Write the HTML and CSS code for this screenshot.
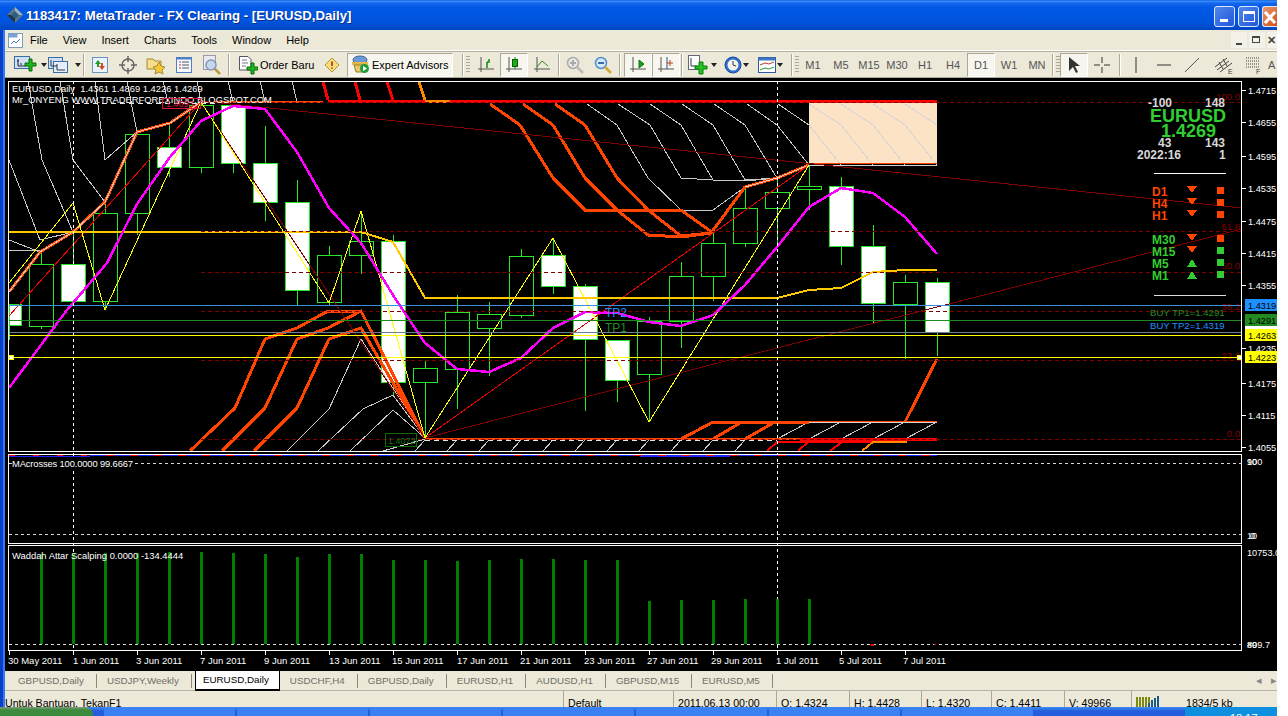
FILE: index.html
```html
<!DOCTYPE html>
<html lang="id">

<head>
    <meta charset="UTF-8">
    <meta name="viewport" content="width=device-width, initial-scale=1.0">
    <title>1183417: MetaTrader - FX Clearing - [EURUSD,Daily]</title>
    <link rel="stylesheet" href="styles.css">
</head>

<body>
    <div class="app">
        <!-- title bar -->
        <div class="titlebar">
            <svg class="title-icon" width="16" height="16" viewBox="0 0 16 16">
                <path d="M8 0 16 8 8 16 0 8Z" fill="#5a7488" />
                <path d="M8 0 16 8H8Z" fill="#9db4c4" />
                <path d="M0 8 8 16V8Z" fill="#1d3346" />
                <path d="M8 4 12 8 8 12 4 8Z" fill="#2c5f7e" />
            </svg>
            <span class="title-text">1183417: MetaTrader - FX Clearing - [EURUSD,Daily]</span>
            <div class="win-btns">
                <div class="win-btn"><span class="glyph-min"></span></div>
                <div class="win-btn"><span class="glyph-max"></span></div>
                <div class="win-btn win-close">
                    <svg width="16" height="21" viewBox="0 0 16 21"><path d="M2 5 12 16M12 5 2 16" stroke="#fff" stroke-width="3" /></svg>
                </div>
            </div>
        </div>

        <!-- menu -->
        <div class="menubar">
            <svg class="menu-icon" width="15" height="15" viewBox="0 0 15 15">
                <rect x="0.5" y="0.5" width="14" height="14" fill="#fff" stroke="#7f9db9" />
                <rect x="0.5" y="0.5" width="9" height="4" fill="#7aa2d8" />
                <path d="M3 11 6 8 8 10 12 6" fill="none" stroke="#4a7ab8" />
            </svg>
            <span class="menu-item">File</span>
            <span class="menu-item">View</span>
            <span class="menu-item">Insert</span>
            <span class="menu-item">Charts</span>
            <span class="menu-item">Tools</span>
            <span class="menu-item">Window</span>
            <span class="menu-item">Help</span>
            <div class="mdi-btns">
                <div class="mdi-btn"><span class="mdi-min"></span></div>
                <div class="mdi-btn"><span class="mdi-rest"></span></div>
                <div class="mdi-btn mdi-x">✕</div>
            </div>
        </div>

        <!-- toolbar -->
        <div class="toolbar">
            <div class="tb w34">
                <svg width="26" height="20" viewBox="0 0 26 20">
                    <rect x="0.5" y="1.5" width="15" height="12" fill="#cfe0f4" stroke="#3a6ea5" />
                    <path d="M4 4V11H12M3 6H5M6 9H8" fill="none" stroke="#223" />
                    <path d="M11 8H15V4H18V8H22V11H18V16H15V11H11Z" fill="#1fb51f" stroke="#0b6b0b" />
                </svg>
                <i class="caret"></i>
            </div>
            <div class="tb w34">
                <svg width="26" height="20" viewBox="0 0 26 20">
                    <rect x="0.5" y="2.5" width="14" height="11" fill="#cfe0f4" stroke="#3a6ea5" />
                    <rect x="5.5" y="6.5" width="14" height="11" fill="#e4eefa" stroke="#3a6ea5" />
                    <path d="M3 5V11H9M9 9V15H17" fill="none" stroke="#334" />
                </svg>
                <i class="caret"></i>
            </div>
            <div class="sep ml2 mr1"></div>
            <div class="tb">
                <svg width="16" height="18" viewBox="0 0 16 18">
                    <rect x="0.5" y="1.5" width="15" height="15" fill="#eaf2fb" stroke="#6b93c4" />
                    <path d="M6 4 9 8H7V11H5V8H3Z" fill="#1f9e1f" />
                    <path d="M10 14 7 10H9V7H11V10H13Z" fill="#d9451f" />
                </svg>
            </div>
            <div class="tb">
                <svg width="20" height="20" viewBox="0 0 20 20" fill="none" stroke="#666">
                    <circle cx="10" cy="10" r="6" stroke-width="1.5" />
                    <path d="M10 1V7M10 13V19M1 10H7M13 10H19" stroke-width="1.5" />
                </svg>
            </div>
            <div class="tb">
                <svg width="20" height="20" viewBox="0 0 20 20">
                    <path d="M1 4H7L9 6H15V14H1Z" fill="#f4dd8c" stroke="#a98a2c" />
                    <path d="M13 7 15 11 19 12 16 15 17 19 13 17 9 19 10 15 7 12 11 11Z" fill="#f5c83a" stroke="#a98a2c" />
                </svg>
            </div>
            <div class="tb">
                <svg width="16" height="16" viewBox="0 0 16 16">
                    <rect x="0.5" y="0.5" width="15" height="15" fill="#f5f8fd" stroke="#4f7fc0" />
                    <rect x="0.5" y="0.5" width="15" height="2" fill="#4f7fc0" />
                    <path d="M3 5H5M3 8H5M3 11H5" stroke="#c33" />
                    <path d="M6 5H13M6 8H13M6 11H13" stroke="#556" />
                </svg>
            </div>
            <div class="tb">
                <svg width="20" height="20" viewBox="0 0 20 20">
                    <rect x="1.5" y="0.5" width="12" height="14" fill="#e9e9ef" stroke="#9a9aa8" />
                    <circle cx="9" cy="10" r="5" fill="#c7d8ee" stroke="#8498b4" stroke-width="1.5" />
                    <path d="M13 14 18 19" stroke="#b89a3c" stroke-width="2.5" />
                </svg>
            </div>
            <div class="sep ml2 mr2"></div>
            <div class="tb w93 tb-text">
                <svg width="20" height="20" viewBox="0 0 20 20">
                    <path d="M1.5 1.5H10L13 4.500V15H1.5Z" fill="#fff" stroke="#556" />
                    <path d="M4 5H9M4 8H10M4 11H8" stroke="#778" />
                    <path d="M9 12H13V8H16V12H20V15H16V19H13V15H9Z" fill="#1fb51f" stroke="#0b6b0b" />
                </svg>
                <span>Order Baru</span>
            </div>
            <div class="tb w14">
                <svg width="16" height="16" viewBox="0 0 16 16">
                    <path d="M8 0 16 8 8 16 0 8Z" fill="#f7df7c" stroke="#a08a2c" />
                    <path d="M8 4V9" stroke="#c5331b" stroke-width="2" />
                    <circle cx="8" cy="11.500" r="1" fill="#c5331b" />
                </svg>
            </div>
            <div class="tb w106 tb-text tb-ea tb-pressed ml8">
                <svg width="19" height="19" viewBox="0 0 19 19">
                    <ellipse cx="9" cy="5" rx="7" ry="4" fill="#6d9bd6" stroke="#3d5f96" />
                    <rect x="1" y="7" width="16" height="3" fill="#e3b94a" />
                    <path d="M3 10H15L13 17H5Z" fill="#e8c86a" stroke="#9a7f2a" />
                    <circle cx="13.500" cy="13.500" r="4.500" fill="#1e9e3a" />
                    <path d="M12 11 16 13.500 12 16Z" fill="#fff" />
                </svg>
                <span>Expert Advisors</span>
            </div>
            <div class="sep ml9"></div>
            <div class="grip ml2 mr2"></div>
            <div class="tb">
                <svg width="16" height="18" viewBox="0 0 16 18" fill="none" stroke="#555"><path d="M3 1V16M0 13H16" /><path d="M9 6V12M9 6H11V3" stroke="#0a8a0a" stroke-width="1.500" /></svg>
            </div>
            <div class="tb tb-pressed">
                <svg width="16" height="18" viewBox="0 0 16 18" fill="none" stroke="#555"><path d="M3 1V16M0 13H16" /><path d="M9 1V13" stroke="#0a8a0a" /><rect x="6.500" y="3.500" width="5" height="7" fill="#14b014" stroke="#0a5a0a" /></svg>
            </div>
            <div class="tb">
                <svg width="16" height="18" viewBox="0 0 16 18" fill="none" stroke="#555"><path d="M3 1V16M0 13H16" /><path d="M3 11 8 5 14 10" stroke="#2a8a2a" /></svg>
            </div>
            <div class="sep ml2 mr1"></div>
            <div class="tb">
                <svg width="18" height="18" viewBox="0 0 18 18" fill="none"><circle cx="7" cy="7" r="5.500" fill="#e8e8e8" stroke="#aaa" stroke-width="1.500" /><path d="M4 7H10M7 4V10" stroke="#aaa" stroke-width="2" /><path d="M11 11 17 17" stroke="#bbb" stroke-width="2.500" /></svg>
            </div>
            <div class="tb">
                <svg width="18" height="18" viewBox="0 0 18 18" fill="none"><circle cx="7" cy="7" r="5.500" fill="#d6e8fa" stroke="#4f8fd0" stroke-width="1.500" /><path d="M4 7H10" stroke="#3a6ea5" stroke-width="2" /><path d="M11 11 17 17" stroke="#d0a93a" stroke-width="2.500" /></svg>
            </div>
            <div class="sep ml2 mr3"></div>
            <div class="tb tb-pressed">
                <svg width="16" height="18" viewBox="0 0 16 18" fill="none" stroke="#555"><path d="M3 1V16M0 13H16" /><path d="M9 4 14 8 9 12Z" fill="#17a017" stroke="#0a7a0a" /></svg>
            </div>
            <div class="tb tb-pressed">
                <svg width="16" height="18" viewBox="0 0 16 18" fill="none" stroke="#555"><path d="M3 1V16M0 13H16" /><path d="M9 1V13" stroke="#2a4f9a" /><path d="M9 7H15M12 4V10" stroke="#b5401a" /></svg>
            </div>
            <div class="sep ml1 mr3"></div>
            <div class="tb w32">
                <svg width="22" height="20" viewBox="0 0 22 20">
                    <rect x="0.500" y="0.500" width="11" height="14" fill="#fff" stroke="#667" />
                    <path d="M3 3V11H9" fill="none" stroke="#334" />
                    <path d="M7 11H11V7H15V11H19V14H15V19H11V14H7Z" fill="#1fc51f" stroke="#0b7b0b" />
                </svg>
                <i class="caret"></i>
            </div>
            <div class="tb w32 ml2">
                <svg width="18" height="18" viewBox="0 0 18 18">
                    <circle cx="9" cy="9" r="8" fill="#2f6fd0" stroke="#1c4a96" />
                    <circle cx="9" cy="9" r="5.500" fill="#f6f4ea" />
                    <path d="M9 5V9L12 10" fill="none" stroke="#334" />
                </svg>
                <i class="caret"></i>
            </div>
            <div class="tb w32 ml2">
                <svg width="18" height="16" viewBox="0 0 18 16">
                    <rect x="0.500" y="0.500" width="17" height="15" fill="#fff" stroke="#2a5a9a" />
                    <rect x="0.500" y="0.500" width="17" height="3" fill="#3f78c0" />
                    <path d="M2 8 7 6 11 7 16 5" fill="none" stroke="#c0392b" />
                    <path d="M2 13 7 11 11 12 16 10" fill="none" stroke="#2a9a3a" />
                </svg>
                <i class="caret"></i>
            </div>
            <div class="sep ml5"></div>
            <div class="grip ml2"></div>
            <div class="tb tf">M1</div>
            <div class="tb tf">M5</div>
            <div class="tb tf">M15</div>
            <div class="tb tf">M30</div>
            <div class="tb tf">H1</div>
            <div class="tb tf">H4</div>
            <div class="tb tf tb-pressed">D1</div>
            <div class="tb tf">W1</div>
            <div class="tb tf">MN</div>
            <div class="sep ml1"></div>
            <div class="grip ml2"></div>
            <div class="tb tb-pressed">
                <svg width="14" height="18" viewBox="0 0 14 18"><path d="M2 1V15L6 11 9 17 11 16 8 10H13Z" fill="#333" /></svg>
            </div>
            <div class="tb">
                <svg width="18" height="18" viewBox="0 0 18 18" stroke="#333" fill="none"><path d="M9 1V7M9 11V17M1 9H7M11 9H17" /></svg>
            </div>
            <div class="sep ml3 mr1"></div>
            <div class="tb"><svg width="4" height="16" viewBox="0 0 4 16"><path d="M2 0V16" stroke="#333" /></svg></div>
            <div class="tb"><svg width="14" height="4" viewBox="0 0 14 4"><path d="M0 2H14" stroke="#333" /></svg></div>
            <div class="tb"><svg width="16" height="16" viewBox="0 0 16 16"><path d="M1 15 15 1" stroke="#555" /></svg></div>
            <div class="tb w32 ml2">
                <svg width="20" height="18" viewBox="0 0 20 18" fill="none" stroke="#444"><path d="M1 11 13 2M3 14 15 5M6 16 18 7M5 6 9 13M9 3 13 10" /><text x="14" y="18" class="tool-letter">E</text></svg>
            </div>
            <div class="tb">
                <svg width="20" height="18" viewBox="0 0 20 18" fill="none" stroke="#444" stroke-dasharray="1 1"><path d="M2 2H15M2 5H15M2 8H15M2 11H15" /><text x="12" y="18" class="tool-letter" stroke="none">F</text></svg>
            </div>
            <div class="tb-a">A</div>
        </div>

        <!-- chart: pixels on this canvas are the content -->
        <svg class="chart" width="1277" height="593" viewBox="0 78 1277 593">
            <rect x="0" y="78" width="1277" height="593" fill="#000" />
            <rect x="809" y="102" width="128" height="62" fill="#fde3c5" />

            <!-- candles -->
            <path class="wick" d="M9.500 304V340M41.500 251V329M73.500 230V264M105.500 202V310M137.500 130V235M169.500 123V177M201.500 100V173M233.500 105V173M265.500 126V221M297.500 180V305M329.500 246V305M361.500 211V274M393.500 235V395M425.500 361V438M457.500 295V409M489.500 302V376M521.500 249V318M553.500 238V294M585.500 284V411M617.500 340V402M649.500 317V422M681.500 262V348M713.500 233V301M745.500 188V247M777.500 180V243M809.500 165V210M841.500 177V265M873.500 225V323M905.500 275V359M937.500 278V356" />
            <rect class="bull" x="9.500" y="304.500" width="12" height="21" />
            <rect class="bear" x="29.500" y="264.500" width="24" height="62" />
            <rect class="bull" x="61.500" y="264.500" width="24" height="37" />
            <rect class="bear" x="93.500" y="213.500" width="24" height="88" />
            <rect class="bear" x="125.500" y="134.500" width="24" height="79" />
            <rect class="bull" x="157.500" y="147.500" width="24" height="20" />
            <rect class="bear" x="189.500" y="105.500" width="24" height="62" />
            <rect class="bull" x="221.500" y="105.500" width="24" height="58" />
            <rect class="bull" x="253.500" y="163.500" width="24" height="39" />
            <rect class="bull" x="285.500" y="202.500" width="24" height="88" />
            <rect class="bear" x="317.500" y="255.500" width="24" height="47" />
            <rect class="bear" x="349.500" y="241.500" width="24" height="14" />
            <rect class="bull" x="381.500" y="241.500" width="24" height="141" />
            <rect class="bear" x="413.500" y="368.500" width="24" height="14" />
            <rect class="bear" x="445.500" y="312.500" width="24" height="57" />
            <rect class="bear" x="477.500" y="314.500" width="24" height="14" />
            <rect class="bear" x="509.500" y="256.500" width="24" height="59" />
            <rect class="bull" x="541.500" y="255.500" width="24" height="31" />
            <rect class="bull" x="573.500" y="286.500" width="24" height="53" />
            <rect class="bull" x="605.500" y="340.500" width="24" height="40" />
            <rect class="bear" x="637.500" y="321.500" width="24" height="53" />
            <rect class="bear" x="669.500" y="276.500" width="24" height="45" />
            <rect class="bear" x="701.500" y="243.500" width="24" height="33" />
            <rect class="bear" x="733.500" y="208.500" width="24" height="35" />
            <rect class="bear" x="765.500" y="192.500" width="24" height="16" />
            <rect class="bear" x="797.500" y="186.500" width="24" height="3" />
            <rect class="bull" x="829.500" y="186.500" width="24" height="60" />
            <rect class="bull" x="861.500" y="246.500" width="24" height="57" />
            <rect class="bear" x="893.500" y="282.500" width="24" height="22" />
            <rect class="bull" x="925.500" y="282.500" width="24" height="50" />

            <!-- gray fan -->
            <g class="gray">
                <polyline points="28,81 42,160 73,232" />
                <polyline points="60,81 73,160 105,202" />
                <polyline points="9,160 40,240 73,232" />
                <polyline points="9,240 40,252" />
                <polyline points="9,250 40,251" />
                <polyline points="95,81 105,160 137,132" />
                <polyline points="127,81 137,132" />
                <polyline points="163,81 168,102" />
                <polyline points="197,81 201,102" />
                <polyline points="228,81 233,102" />
                <polyline points="260,81 265,102" />
                <polyline points="292,81 297,102" />
                <polyline points="587,104 617,125 648,178 681,210 713,210 745,187" />
                <polyline points="618,104 650,125 681,178 713,180 745,181 777,178" />
                <polyline points="650,104 681,125 713,180" />
                <polyline points="682,104 713,125 745,180 777,178" />
                <polyline points="714,104 745,125 777,178" />
                <polyline points="747,104 777,125 809,165" />
                <polyline points="778,104 809,125" />
                <polyline points="287,451 329,409 361,339 425,438" />
                <polyline points="318,451 363,409 393,395 425,438" />
                <polyline points="350,451 393,410 425,438" />
                <polyline points="383,451 425,439" />
                <polyline points="415,451 425,440" />
                <path d="M447 451 457 440M479 451 489 440M511 451 521 440M543 451 553 440M575 451 585 440M607 451 617 440M639 451 649 440M671 451 681 440M703 451 713 440M735 451 745 440" />
                <path d="M777 439 809 422M809 439 841 422M841 439 873 422M873 439 905 422M905 439 937 422" />
            </g>
            <g class="peach-line">
                <polyline points="809,125 841,165" />
                <polyline points="809,104 841,125 873,165" />
                <polyline points="841,104 873,125 905,165" />
                <polyline points="873,104 905,125 937,165" />
                <polyline points="905,104 937,125" />
            </g>

            <!-- orange bands -->
            <g class="orange">
                <polyline points="9,292 40,252 73,232 105,202 137,132 170,123 201,102" />
                <polyline points="490,104 520,125 553,178 585,210 681,210 713,233" />
                <polyline points="523,104 553,125 585,178 617,210 648,235 681,237 711,233" />
                <polyline points="555,104 585,125 617,178 648,210 681,236 711,233" />
                <polyline points="711,233 745,187 777,178 809,165" />
                <polyline points="190,451 235,408 265,339 297,328 328,311 361,311 425,438" />
                <polyline points="222,451 265,408 297,339 328,328 361,311 425,438" />
                <polyline points="254,451 297,408 329,339 361,328 425,438" />
                <polyline points="681,439 713,422 809,422" />
                <polyline points="713,439 740,423" />
                <polyline points="745,439 773,423" />
                <polyline points="905,422 937,359" />
            </g>
            <path class="thin-orange" d="M425 439H937M215 102H323" />
            <path class="hair-orange" d="M809 163.500H937M809 421.500H937" />
            <polyline class="light" points="9,292 40,252 73,232 105,202 137,132 170,123 201,102" />
            <polyline class="light" points="745,187 777,178 809,165" />
            <line class="dash-light" x1="425" y1="440" x2="777" y2="440" />
            <line class="dash-light" x1="75" y1="103" x2="215" y2="103" />
            <line class="peach-line" x1="809" y1="165.500" x2="937" y2="165.500" />
            <line class="peach-line" x1="809" y1="422.500" x2="937" y2="422.500" />

            <!-- red bands -->
            <path class="red-band" d="M323 82 328 100M355 82 360 100M387 82 393 100M800 439H937" />
            <path class="red-top" d="M328 101.500H937" />
            <path class="orange-stub" d="M419 82 425 100M425 101H450" />
            <path class="red-low" d="M767 451 777 442H873M798 451 808 442M830 451 842 442" />
            <path class="orange-low" d="M862 451 873 442H907" />

            <!-- trend lines -->
            <g class="thin-red">
                <line x1="9" y1="316" x2="201" y2="102" />
                <line x1="425" y1="438" x2="809" y2="165" />
            </g>
            <g class="thin-darkred">
                <line x1="201" y1="101" x2="1242" y2="208" />
                <line x1="425" y1="438" x2="1242" y2="229" />
                <line x1="201" y1="102" x2="425" y2="438" />
            </g>
            <polyline class="yellow-zig" points="9,283 73,203 105,310 201,102 329,303 361,211 425,438 553,238 649,422 809,165" />
            <polyline class="gold" points="9,232 361,232 393,242 425,298 777,298 809,290 841,288 873,272 905,270 937,270" />
            <polyline class="magenta" points="9,388 67,310 107,263 137,204 170,157 201,121 233,106 265,109 297,152 329,208 361,243 393,295 425,343 457,369 489,372 521,358 553,328 585,312 617,313 649,322 681,326 713,315 745,285 777,247 809,207 841,188 873,193 905,217 937,254" />

            <!-- fibo levels -->
            <g class="fibo">
                <line x1="201" y1="102.500" x2="1242" y2="102.500" />
                <line x1="201" y1="231.500" x2="1242" y2="231.500" />
                <line x1="201" y1="272.500" x2="1242" y2="272.500" />
                <line x1="201" y1="311.500" x2="1242" y2="311.500" />
                <line x1="201" y1="360.500" x2="1242" y2="360.500" />
                <line x1="201" y1="439.500" x2="1242" y2="439.500" />
            </g>
            <g class="fibo-text">
                <text x="1240" y="100">100.0</text>
                <text x="1240" y="230">61.8</text>
                <text x="1240" y="269">50.0</text>
                <text x="1240" y="310">38.2</text>
                <text x="1240" y="359">23.6</text>
                <text x="1240" y="437">0.0</text>
            </g>

            <!-- horizontal price lines -->
            <line class="hl" x1="9" y1="305.500" x2="1242" y2="305.500" stroke="#3a8fdc" />
            <line class="hl" x1="9" y1="320.500" x2="1242" y2="320.500" stroke="#1e8a1e" />
            <line class="hl" x1="9" y1="332.500" x2="1242" y2="332.500" stroke="#708090" />
            <line class="hl" x1="9" y1="335.500" x2="1242" y2="335.500" stroke="#ffff00" />
            <line class="hl" x1="9" y1="357.500" x2="1242" y2="357.500" stroke="#ffff00" />
            <rect x="9" y="355" width="4" height="4" fill="#fff" stroke="#ffff00" />
            <rect x="1237" y="355" width="4" height="4" fill="#fff" stroke="#ffff00" />

            <!-- period separators -->
            <line class="vsep" x1="73.500" y1="81" x2="73.500" y2="651" />
            <line class="vsep" x1="777.500" y1="81" x2="777.500" y2="651" />

            <!-- panes -->
            <rect class="frame" x="8.500" y="81.500" width="1233" height="370" />
            <rect class="frame" x="8.500" y="454.500" width="1233" height="89" />
            <rect class="frame" x="8.500" y="545.500" width="1233" height="105" />
            <path d="M988 82H998L993 87Z" fill="#708090" />

            <!-- indicator pane -->
            <path class="mac-red" d="M90 455.500H937" />
            <path class="mac-blue" d="M90 455.500H937" />
            <path class="mac-stub" d="M9 455.500H90" />
            <path class="mac-line" d="M9 456.500H90M640 456.500H730" />
            <line class="dash-gray" x1="9" y1="463.500" x2="1242" y2="463.500" />
            <line class="dash-gray" x1="9" y1="534.500" x2="1242" y2="534.500" />
            <rect x="12" y="458" width="122" height="11" fill="#000" />
            <text class="ct" x="12" y="467" textLength="121">MAcrosses 100.0000 99.6667</text>

            <!-- histogram -->
            <path class="bars" d="M41 554V644M73 553V644M105 553V644M137 553V644M169 552V644M201 552V644M233 553V644M265 554V644M297 557V644M329 554V644M361 554V644M393 560V644M425 560V644M457 561V644M489 560V644M521 559V644M553 559V644M585 560V644M617 560V644M649 601V644M681 600V644M713 600V644M745 599V644M777 599V644M809 599V644" />
            <line class="dash-gray" x1="9" y1="644.500" x2="1242" y2="644.500" />
            <rect x="871" y="644" width="3" height="2" fill="#ff0000" />
            <rect x="934" y="644" width="2" height="1" fill="#ff0000" />
            <text class="ct" x="12" y="559">Waddah Attar Scalping 0.0000 -134.4444</text>

            <!-- corner labels -->
            <text class="ct" x="12" y="92">EURUSD,Daily  1.4361 1.4869 1.4226 1.4269</text>
            <text class="ct" x="12" y="103">Mr_ONYENG WWW.TRADERFOREXINDO.BLOGSPOT.COM</text>
            <rect x="162.500" y="98.500" width="38" height="10" fill="none" stroke="#dc143c" class="crisp" />
            <text class="tiny-label" x="166" y="107" fill="#dc143c">1.4693</text>
            <rect x="385.500" y="433.500" width="31" height="13" fill="none" stroke="#0b6b0b" class="crisp" />
            <text class="tiny-label" x="388" y="444" fill="#0b7b0b">1.4072</text>
            <text class="tp-label" x="605" y="317" fill="#1e90ff">TP2</text>
            <text class="tp-label" x="605" y="332" fill="#228b22">TP1</text>

            <!-- dashboard -->
            <g class="dash-white">
                <text x="1148" y="107">-100</text>
                <text x="1205" y="107">148</text>
                <text x="1158" y="147">43</text>
                <text x="1205" y="147">143</text>
                <text x="1137" y="159">2022:16</text>
                <text x="1219" y="159">1</text>
            </g>
            <text class="dash-big" x="1150" y="122">EURUSD</text>
            <text class="dash-price" x="1161" y="137">1.4269</text>
            <line x1="1154" y1="173.500" x2="1226" y2="173.500" stroke="#fff" class="crisp" />
            <line x1="1154" y1="295.500" x2="1226" y2="295.500" stroke="#ddd" class="crisp" />
            <g class="sig sig-red">
                <text x="1152" y="196">D1</text>
                <text x="1152" y="208">H4</text>
                <text x="1152" y="220">H1</text>
                <path d="M1187 186H1197L1192 193ZM1187 198H1197L1192 205ZM1187 210H1197L1192 217ZM1187 234H1197L1192 241ZM1187 246H1197L1192 253Z" />
                <rect x="1217" y="187" width="7" height="7" />
                <rect x="1217" y="199" width="7" height="7" />
                <rect x="1217" y="211" width="7" height="7" />
                <rect x="1217" y="235" width="7" height="7" />
            </g>
            <g class="sig sig-green">
                <text x="1152" y="244">M30</text>
                <text x="1152" y="256">M15</text>
                <text x="1152" y="268">M5</text>
                <text x="1152" y="280">M1</text>
                <path d="M1187 267H1197L1192 259ZM1187 279H1197L1192 271Z" />
                <rect x="1217" y="247" width="7" height="7" />
                <rect x="1217" y="259" width="7" height="7" />
                <rect x="1217" y="271" width="7" height="7" />
            </g>
            <text class="tp-note" x="1150" y="316" fill="#228b22">BUY TP1=1.4291</text>
            <text class="tp-note" x="1150" y="329" fill="#1e90ff">BUY TP2=1.4319</text>

            <!-- price axis -->
            <path class="ticks" d="M1242 90.500H1246M1242 122.500H1246M1242 156.500H1246M1242 188.500H1246M1242 221.500H1246M1242 253.500H1246M1242 285.500H1246M1242 348.500H1246M1242 383.500H1246M1242 415.500H1246M1242 447.500H1246" />
            <g class="axis-text">
                <text x="1248" y="94">1.4715</text>
                <text x="1248" y="126">1.4655</text>
                <text x="1248" y="160">1.4595</text>
                <text x="1248" y="192">1.4535</text>
                <text x="1248" y="225">1.4475</text>
                <text x="1248" y="257">1.4415</text>
                <text x="1248" y="289">1.4355</text>
                <text x="1248" y="352">1.4235</text>
                <text x="1248" y="387">1.4175</text>
                <text x="1248" y="419">1.4115</text>
                <text x="1248" y="451">1.4055</text>
                <text x="1247" y="465">100</text>
                <text x="1247" y="465">90</text>
                <text x="1247" y="539">10</text>
                <text x="1250" y="539">0</text>
                <text x="1247" y="556">10753.0</text>
                <text x="1247" y="648">899.7</text>
                <text x="1247" y="648">#0</text>
            </g>
            <rect x="1245" y="325" width="32" height="5" fill="#fff" />
            <rect x="1245" y="299" width="32" height="12" fill="#1e90ff" />
            <rect x="1245" y="314" width="32" height="12" fill="#228b22" />
            <rect x="1245" y="329" width="32" height="12" fill="#ffff00" />
            <rect x="1245" y="351" width="32" height="12" fill="#ffff00" />
            <g class="axis-box">
                <text x="1248" y="309">1.4319</text>
                <text x="1248" y="324">1.4291</text>
                <text x="1248" y="339">1.4263</text>
                <text x="1248" y="361">1.4223</text>
            </g>

            <!-- time axis -->
            <path class="ticks" d="M9.500 651V655M73.500 651V655M137.500 651V655M201.500 651V655M265.500 651V655M329.500 651V655M393.500 651V655M457.500 651V655M521.500 651V655M585.500 651V655M649.500 651V655M713.500 651V655M777.500 651V655M841.500 651V655M905.500 651V655" />
            <g class="time-text">
                <text x="8" y="664">30 May 2011</text>
                <text x="73" y="664">1 Jun 2011</text>
                <text x="136" y="664">3 Jun 2011</text>
                <text x="200" y="664">7 Jun 2011</text>
                <text x="264" y="664">9 Jun 2011</text>
                <text x="329" y="664">13 Jun 2011</text>
                <text x="392" y="664">15 Jun 2011</text>
                <text x="457" y="664">17 Jun 2011</text>
                <text x="520" y="664">21 Jun 2011</text>
                <text x="584" y="664">23 Jun 2011</text>
                <text x="647" y="664">27 Jun 2011</text>
                <text x="711" y="664">29 Jun 2011</text>
                <text x="776" y="664">1 Jul 2011</text>
                <text x="839" y="664">5 Jul 2011</text>
                <text x="903" y="664">7 Jul 2011</text>
            </g>
        </svg>

        <!-- tabs -->
        <div class="tabs">
            <div class="tab">GBPUSD,Daily</div>
            <div class="tab">USDJPY,Weekly</div>
            <div class="tab active">EURUSD,Daily</div>
            <div class="tab">USDCHF,H4</div>
            <div class="tab">GBPUSD,Daily</div>
            <div class="tab">EURUSD,H1</div>
            <div class="tab">AUDUSD,H1</div>
            <div class="tab">GBPUSD,M15</div>
            <div class="tab">EURUSD,M5</div>
            <div class="tab-arrows"><span>◂</span><span>▸</span></div>
        </div>

        <!-- status -->
        <div class="statusbar">
            <div class="cell">Untuk Bantuan, TekanF1</div>
            <div class="cell">Default</div>
            <div class="cell">2011.06.13 00:00</div>
            <div class="cell">O: 1.4324</div>
            <div class="cell">H: 1.4428</div>
            <div class="cell">L: 1.4320</div>
            <div class="cell">C: 1.4411</div>
            <div class="cell">V: 49966</div>
            <div class="cell cell-conn">
                <svg width="24" height="12" viewBox="0 0 24 12">
                    <path d="M1 12V2M4 12V2M7 12V2M10 12V2M13 12V2" stroke="#7a8a10" stroke-width="2" />
                    <path d="M13 12V8M16 12V5M19 12V3M22 12V1" stroke="#1c5a8a" stroke-width="2" />
                </svg>
                <span>1834/5 kb</span>
            </div>
        </div>

        <!-- taskbar, cut off by the screenshot -->
        <div class="taskbar">
            <div class="start"></div>
            <div class="task"></div>
            <div class="task"></div>
            <div class="task"></div>
            <div class="task"></div>
            <div class="task"></div>
            <div class="task"></div>
            <div class="task"></div>
            <div class="tray">18:17</div>
        </div>
    </div>
</body>

</html>
```

FILE: styles.css
```css
html,
body {
    margin: 0;
    height: 100%;
    background: #fff;
    overflow: hidden;
}

.app {
    position: relative;
    width: 1277px;
    height: 716px;
    display: flex;
    flex-direction: column;
    overflow: hidden;
    font-family: "Liberation Sans", Arial, sans-serif;
    font-size: 11px;
    color: #000;
    background: #ece9d8;
}

/* window border lies over the chart and bars */
.app::after {
    content: "";
    position: absolute;
    left: 0;
    top: 30px;
    bottom: 9px;
    width: 5px;
    background: linear-gradient(90deg, #0b3fc8 0 3px, #2f7df5 3px);
}

/* title bar */
.titlebar {
    height: 30px;
    flex: none;
    display: flex;
    align-items: center;
    padding-left: 7px;
    box-sizing: border-box;
    background: linear-gradient(#0a50d8 0, #3d95ff 1px, #1668ee 3px, #0058e6 8px, #0053dc 22px, #0048c4 29px);
}

.title-icon {
    margin-right: 3px;
}

.title-text {
    color: #fff;
    font-weight: bold;
    font-size: 13.2px;
    text-shadow: 1px 1px 0 #0a2f8c;
    flex: 1;
    white-space: nowrap;
}

.win-btns {
    display: flex;
    gap: 3px;
    margin-top: 3px;
}

.win-btn {
    width: 21px;
    height: 21px;
    box-sizing: border-box;
    border: 1px solid #dfe8fb;
    border-radius: 3px;
    background: linear-gradient(135deg, #4f86ec, #2157d8);
    position: relative;
    overflow: hidden;
}

.win-close {
    width: 15px;
    border-right: 0;
    border-radius: 3px 0 0 3px;
    background: linear-gradient(135deg, #e69a6e, #d0501a);
}

.win-close svg {
    display: block;
}

.glyph-min {
    position: absolute;
    left: 5px;
    bottom: 4px;
    width: 8px;
    height: 3px;
    background: #fff;
}

.glyph-max {
    position: absolute;
    left: 4px;
    top: 4px;
    width: 12px;
    height: 11px;
    box-sizing: border-box;
    border: 1px solid #fff;
    border-top-width: 3px;
}

/* menu */
.menubar {
    height: 20px;
    flex: none;
    display: flex;
    align-items: center;
    padding-left: 8px;
    box-sizing: border-box;
}

.menu-icon {
    margin-right: 7px;
}

.menu-item {
    margin-right: 15px;
}

.mdi-btns {
    margin-left: auto;
    display: flex;
    gap: 2px;
}

.mdi-btn {
    width: 16px;
    height: 16px;
    background: #f4f2e8;
    position: relative;
    color: #444;
    font-size: 11px;
    font-weight: bold;
    line-height: 16px;
    overflow: hidden;
}

.mdi-x {
    width: 10px;
}

.mdi-min {
    position: absolute;
    left: 5px;
    bottom: 3px;
    width: 6px;
    height: 2px;
    background: #444;
}

.mdi-rest {
    position: absolute;
    left: 3px;
    top: 4px;
    width: 8px;
    height: 7px;
    border: 1px solid #444;
    border-top-width: 2px;
    box-sizing: border-box;
}

/* toolbar */
.toolbar {
    height: 28px;
    flex: none;
    display: flex;
    align-items: center;
    padding: 1px 0 0 13px;
    box-sizing: border-box;
    border-top: 1px solid #fff;
    box-shadow: inset 0 1px 0 #b5b2a4;
    border-bottom: 1px solid #aca899;
    white-space: nowrap;
    overflow: hidden;
}

.tb {
    width: 28px;
    height: 24px;
    flex: none;
    display: flex;
    align-items: center;
    justify-content: center;
    box-sizing: border-box;
    color: #555;
}

.tb-text {
    justify-content: flex-start;
    gap: 2px;
    padding-left: 6px;
    color: #000;
}

.tb-ea {
    padding-left: 3px;
}

.tb-pressed {
    border: 1px solid #fff;
    border-left-color: #aca899;
    border-top-color: #aca899;
    background: repeating-conic-gradient(#f4f2e8 0 25%, #fbfaf4 0 50%) 0 0 / 2px 2px;
}

.tb-a {
    width: 10px;
    flex: none;
    color: #555;
}

.w14 {
    width: 14px;
}

.w32 {
    width: 32px;
}

.w34 {
    width: 34px;
}

.w93 {
    width: 93px;
}

.w106 {
    width: 106px;
}

.sep {
    width: 1px;
    height: 22px;
    flex: none;
    background: #aca899;
    border-right: 1px solid #fff;
}

.grip {
    width: 4px;
    height: 18px;
    flex: none;
    background: repeating-linear-gradient(#aca899 0 1px, transparent 1px 3px);
}

.ml1 { margin-left: 1px; }
.ml2 { margin-left: 2px; }
.ml3 { margin-left: 3px; }
.ml5 { margin-left: 5px; }
.ml8 { margin-left: 8px; }
.ml9 { margin-left: 9px; }
.mr1 { margin-right: 1px; }
.mr2 { margin-right: 2px; }
.mr3 { margin-right: 3px; }

.caret {
    width: 0;
    height: 0;
    margin-left: 1px;
    border: 3px solid transparent;
    border-top: 4px solid #222;
    border-bottom: 0;
}

.tool-letter {
    font-size: 7px;
    fill: #444;
    stroke: none;
}

/* chart */
.chart {
    display: block;
    flex: none;
}

.chart polyline,
.chart path {
    fill: none;
}

.chart .sig path {
    fill: inherit;
}

.chart polyline,
.chart line,
.chart path,
.chart rect,
.crisp {
    shape-rendering: crispEdges;
}

.wick {
    stroke: #28e628;
}

.bull,
.bear {
    stroke: #28e628;
}

.bull {
    fill: #fff;
}

.bear {
    fill: #000;
}

.gray {
    stroke: #c8c8c8;
}

.peach-line {
    stroke: #d4d4d8;
}

.orange {
    stroke: #ff4500;
    stroke-width: 3;
}

.thin-orange {
    stroke: #ff4500;
    stroke-width: 2;
}

.hair-orange {
    stroke: #ff4500;
}

.light {
    stroke: #e8c8b8;
}

.dash-light {
    stroke: #e8e8e8;
    stroke-dasharray: 5 4;
}

.red-band,
.red-top {
    stroke: #ff0000;
    stroke-width: 3;
}

.red-low {
    stroke: #ff0000;
    stroke-width: 2;
}

.orange-stub {
    stroke: #ff8c00;
    stroke-width: 3;
}

.orange-low {
    stroke: #ff8c00;
    stroke-width: 2;
}

.thin-red {
    stroke: #ee0000;
}

.thin-darkred {
    stroke: #800000;
}

.yellow-zig {
    stroke: #ffff00;
}

.gold {
    stroke: #ffc800;
    stroke-width: 2;
}

.magenta {
    stroke: #ff00ff;
    stroke-width: 2.500;
}

.fibo {
    stroke: #800000;
    stroke-dasharray: 4 3;
}

.fibo-text text {
    fill: #800000;
    font-size: 9.500px;
    text-anchor: end;
}

.vsep {
    stroke: #fff;
    stroke-dasharray: 3 3;
}

.frame {
    fill: none;
    stroke: #fff;
}

.dash-gray {
    stroke: #d8d8d8;
    stroke-dasharray: 3 3;
}

.mac-red,
.mac-stub {
    stroke: #ff0000;
}

.mac-stub {
    stroke-dasharray: 6 18;
}

.mac-blue,
.mac-line {
    stroke: #2222ff;
}

.mac-blue {
    stroke-dasharray: 16 8;
}

.bars {
    stroke: #008000;
    stroke-width: 3;
}

.ct {
    fill: #fff;
    font-size: 9.400px;
    white-space: pre;
}

.tiny-label {
    font-size: 9px;
}

.tp-label {
    font-size: 12px;
}

.dash-white text {
    fill: #d8d8d8;
    font-size: 12px;
    font-weight: bold;
}

.dash-big {
    fill: #32cd32;
    font-size: 18px;
    font-weight: bold;
}

.dash-price {
    fill: #32cd32;
    font-size: 18px;
    font-weight: bold;
}

.sig text {
    font-size: 12px;
    font-weight: bold;
}

.sig-red {
    fill: #ff4500;
}

.sig-green {
    fill: #32cd32;
}

.tp-note {
    font-size: 9.600px;
}

.ticks {
    stroke: #fff;
}

.axis-text text {
    fill: #fff;
    font-size: 9.200px;
}

.time-text text {
    fill: #fff;
    font-size: 9.500px;
}

.axis-box text {
    fill: #000;
    font-size: 9.200px;
}

/* tabs */
.tabs {
    height: 20px;
    flex: none;
    display: flex;
    align-items: center;
    padding-left: 8px;
    box-sizing: border-box;
    font-size: 9.800px;
    border-bottom: 1px solid #b5b2a4;
}

.tab {
    padding: 0 12px 0 10px;
    height: 14px;
    line-height: 14px;
    color: #6e6e66;
    border-right: 1px solid #8a887c;
}

.tab.active {
    height: 20px;
    line-height: 18px;
    color: #000;
    background: #fff;
    border: 1px solid #000;
    border-width: 0 1px 2px 1px;
    box-sizing: border-box;
    padding: 0 10px 0 7px;
    margin-left: 3px;
}

.tab-arrows {
    margin-left: auto;
    display: flex;
    gap: 9px;
    color: #888;
    font-size: 11px;
}

/* status */
.statusbar {
    height: 16px;
    flex: none;
    display: grid;
    grid-template-columns: 558px 110px 103px 73px 72px 70px 73px 67px 1fr;
    margin-left: 5px;
    font-size: 10.600px;
    overflow: hidden;
}

.cell {
    height: 16px;
    line-height: 24px;
    padding-left: 4px;
    border-left: 1px solid #aca899;
    white-space: nowrap;
}

.cell:first-child {
    border-left: 0;
    padding-left: 0;
}

.cell-conn {
    display: flex;
    gap: 26px;
    align-items: flex-start;
}

.cell-conn svg {
    margin-top: 4px;
}

/* taskbar */
.taskbar {
    height: 9px;
    flex: none;
    display: flex;
    gap: 2px;
    padding-top: 1px;
    box-sizing: border-box;
    background: linear-gradient(#3f8cf3, #245edc 4px);
    overflow: hidden;
}

.start {
    width: 93px;
    margin-right: 9px;
    margin-top: -1px;
    border-radius: 0 8px 0 0;
    background: linear-gradient(#7f9f7f, #3c8a3c 3px);
}

.task {
    width: 131px;
    border-radius: 3px 3px 0 0;
    background: #3c81f3;
}

.tray {
    margin-left: auto;
    width: 92px;
    margin-top: -1px;
    padding-left: 45px;
    box-sizing: border-box;
    background: #0f8fe0;
    color: #fff;
    font-size: 11px;
    line-height: 22px;
}
```
